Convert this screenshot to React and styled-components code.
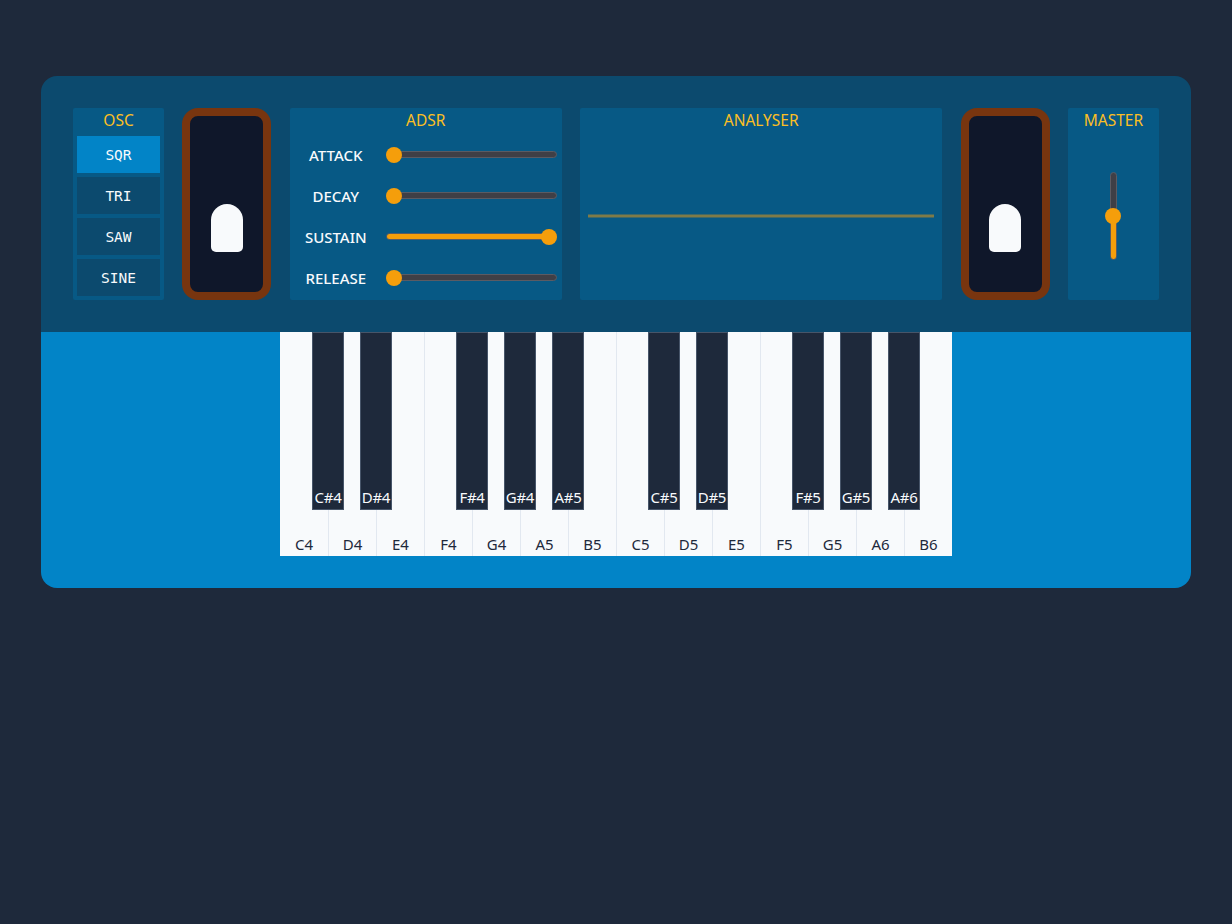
import React, { useState } from 'react';
import styled, { createGlobalStyle } from 'styled-components';

const GlobalStyle = createGlobalStyle`
  body {
    margin: 0;
    background: #1e293b;
    font-family: 'Noto Sans', 'Open Sans', sans-serif;
  }
`;

const Synth = styled.div`
  width: 1150px;
  margin: 76px auto 0;
  border-radius: 16px;
  overflow: hidden;
`;

const ControlDeck = styled.div`
  background: #0c4a6e;
  padding: 32px;
  height: 192px;
  display: flex;
  justify-content: space-between;
`;

const Panel = styled.div`
  width: ${(p) => p.width}px;
  box-sizing: border-box;
  background: #075985;
  border-radius: 2px;
  padding: 0 ${(p) => p.padX || 4}px 4px;
  display: flex;
  flex-direction: column;
`;

const PanelTitle = styled.div`
  color: #fbbf24;
  font-size: 15.5px;
  line-height: 24px;
  text-align: center;
  margin-bottom: 4px;
`;

const ButtonStack = styled.div`
  display: flex;
  flex-direction: column;
  gap: 4px;
`;

const WaveButton = styled.button`
  height: 37px;
  border: 0;
  padding: 0;
  background: ${(p) => (p.active ? '#0284c7' : '#0c4a6e')};
  color: #f8fafc;
  font-family: 'DejaVu Sans Mono', 'Liberation Mono', monospace;
  font-size: 14.5px;
  cursor: pointer;
`;

const Wheel = styled.div`
  width: 89px;
  height: 192px;
  box-sizing: border-box;
  border: 8px solid #78350f;
  border-radius: 16px;
  background: #0f172a;
  display: flex;
  flex-direction: column;
  align-items: center;
  padding-top: 88px;
`;

const WheelHandle = styled.div`
  width: 32px;
  height: 48px;
  background: #f8fafc;
  border-radius: 16px 16px 5px 5px;
`;

const AdsrRow = styled.div`
  height: 37px;
  display: flex;
  align-items: center;
`;

const AdsrLabel = styled.div`
  width: 84px;
  text-align: center;
  color: #f8fafc;
  font-size: 15px;
  font-weight: 500;
`;

const Slider = styled.div`
  position: relative;
  flex: 1;
  margin: 0 1px 0 8px;
  height: 16px;
  display: flex;
  align-items: center;
`;

const Track = styled.div`
  position: relative;
  width: 100%;
  height: 7px;
  box-sizing: border-box;
  border-radius: 4px;
  background: #3f3f46;
  border: 1px solid #5b5b63;
  overflow: hidden;
`;

const Fill = styled.div`
  height: 100%;
  background: #f59e0b;
`;

const Thumb = styled.div`
  position: absolute;
  width: 16px;
  height: 16px;
  border-radius: 50%;
  background: #f59e0b;
`;

const AnalyserScreen = styled.div`
  flex: 1;
  display: flex;
  align-items: center;
`;

const MasterBody = styled.div`
  flex: 1;
  display: flex;
  align-items: center;
  justify-content: center;
`;

const VSlider = styled.div`
  position: relative;
  width: 16px;
  height: 88px;
  display: flex;
  justify-content: center;
`;

const VTrack = styled.div`
  width: 7px;
  height: 100%;
  box-sizing: border-box;
  border-radius: 4px;
  border: 1px solid #5b5b63;
  background: linear-gradient(to bottom, #3f3f46 50%, #f59e0b 50%);
`;

const KeyDeck = styled.div`
  background: #0284c7;
  padding-bottom: 32px;
  display: flex;
  justify-content: center;
`;

const Keyboard = styled.div`
  position: relative;
  display: flex;
  height: 224px;
`;

const WhiteKey = styled.div`
  width: 48px;
  height: 100%;
  box-sizing: border-box;
  background: #f8fafc;
  border-left: ${(p) => (p.first ? 0 : 1)}px solid #e2e8f0;
  display: flex;
  align-items: flex-end;
  justify-content: center;
  padding-bottom: 2px;
  color: #1e293b;
  font-size: 15px;
  line-height: 20px;
`;

const BlackKey = styled.div`
  position: absolute;
  top: 0;
  width: 32px;
  height: 178px;
  box-sizing: border-box;
  background: #1e293b;
  border: 1px solid #475569;
  display: flex;
  align-items: flex-end;
  justify-content: center;
  padding-bottom: 2px;
  color: #f8fafc;
  font-size: 15px;
  line-height: 20px;
  letter-spacing: -0.3px;
  white-space: nowrap;
`;

const whites = ['C4', 'D4', 'E4', 'F4', 'G4', 'A5', 'B5', 'C5', 'D5', 'E5', 'F5', 'G5', 'A6', 'B6'];
const blacks = [
  ['C#4', 1], ['D#4', 2], ['F#4', 4], ['G#4', 5], ['A#5', 6],
  ['C#5', 8], ['D#5', 9], ['F#5', 11], ['G#5', 12], ['A#6', 13],
];

const adsr = [
  ['ATTACK', 0],
  ['DECAY', 0],
  ['SUSTAIN', 1],
  ['RELEASE', 0],
];

const HSlider = ({ value }) => (
  <Slider>
    <Track>
      <Fill style={{ width: `${value * 100}%` }} />
    </Track>
    <Thumb style={{ left: `calc(${value} * (100% - 16px))` }} />
  </Slider>
);

const App = () => {
  const [wave, setWave] = useState('SQR');

  return (
    <>
      <GlobalStyle />
      <Synth>
        <ControlDeck>
          <Panel width={91}>
            <PanelTitle>OSC</PanelTitle>
            <ButtonStack>
              {['SQR', 'TRI', 'SAW', 'SINE'].map((w) => (
                <WaveButton key={w} active={wave === w} onClick={() => setWave(w)}>
                  {w}
                </WaveButton>
              ))}
            </ButtonStack>
          </Panel>
          <Wheel>
            <WheelHandle />
          </Wheel>
          <Panel width={272}>
            <PanelTitle>ADSR</PanelTitle>
            <ButtonStack>
              {adsr.map(([name, v]) => (
                <AdsrRow key={name}>
                  <AdsrLabel>{name}</AdsrLabel>
                  <HSlider value={v} />
                </AdsrRow>
              ))}
            </ButtonStack>
          </Panel>
          <Panel width={362} padX={8}>
            <PanelTitle>ANALYSER</PanelTitle>
            <AnalyserScreen>
              <svg width="346" height="160" viewBox="0 0 346 160">
                <line x1="0" y1="80" x2="346" y2="80" stroke="#f59e0b" strokeOpacity="0.5" strokeWidth="3" />
              </svg>
            </AnalyserScreen>
          </Panel>
          <Wheel>
            <WheelHandle />
          </Wheel>
          <Panel width={91}>
            <PanelTitle>MASTER</PanelTitle>
            <MasterBody>
              <VSlider>
                <VTrack />
                <Thumb style={{ top: 36 }} />
              </VSlider>
            </MasterBody>
          </Panel>
        </ControlDeck>
        <KeyDeck>
          <Keyboard>
            {whites.map((n, i) => (
              <WhiteKey key={n} first={i === 0}>{n}</WhiteKey>
            ))}
            {blacks.map(([n, b]) => (
              <BlackKey key={n} style={{ left: b * 48 - 16 }}>{n}</BlackKey>
            ))}
          </Keyboard>
        </KeyDeck>
      </Synth>
    </>
  );
};

export default App;
